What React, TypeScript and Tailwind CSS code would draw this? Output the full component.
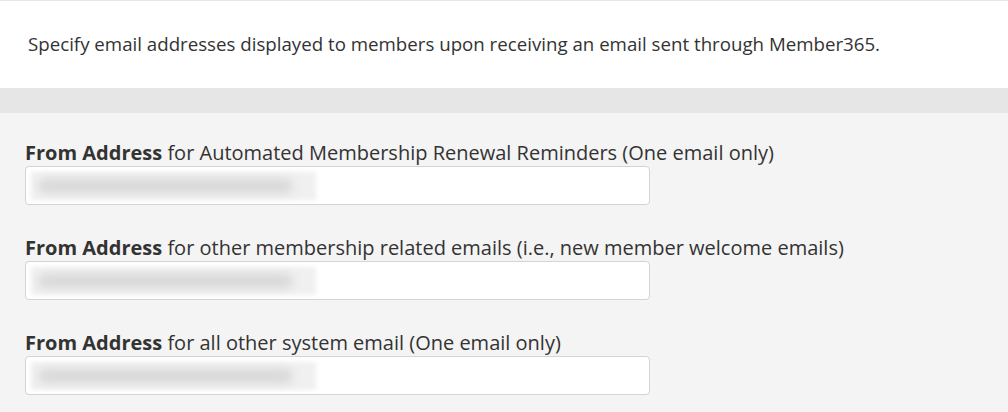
import React from 'react'

const fields = [
  'for Automated Membership Renewal Reminders (One email only)',
  'for other membership related emails (i.e., new member welcome emails)',
  'for all other system email (One email only)',
]

function BlurredInput() {
  return (
    <div className="relative h-[39px] w-[625px] rounded-[4px] border border-[#d4d4d4] bg-white overflow-hidden">
      <div className="absolute left-[5px] top-[5px] h-[28px] w-[285px] bg-[#f0f0f0] blur-[2px]" />
      <div className="absolute left-[12px] top-[12px] h-[14px] w-[255px] rounded-full bg-[#d8d8d8] blur-[5px]" />
    </div>
  )
}

export default function App() {
  return (
    <div className="w-full min-h-screen bg-[#f4f4f4] text-[#333] [font-family:'Open_Sans',sans-serif]">
      <div className="border-t border-[#e6e6e6] bg-white h-[88px] flex items-center px-[28px]">
        <p className="text-[18.7px] text-[#333]">
          Specify email addresses displayed to members upon receiving an email sent through Member365.
        </p>
      </div>
      <div className="h-[25px] bg-[#e6e6e6]" />
      <div className="px-[25px] pt-[26px] flex flex-col gap-[29px]">
        {fields.map((f) => (
          <div key={f}>
            <label className="block text-[20px] leading-[27px] text-[#333]">
              <span className="font-bold">From Address</span> {f}
            </label>
            <BlurredInput />
          </div>
        ))}
      </div>
    </div>
  )
}
